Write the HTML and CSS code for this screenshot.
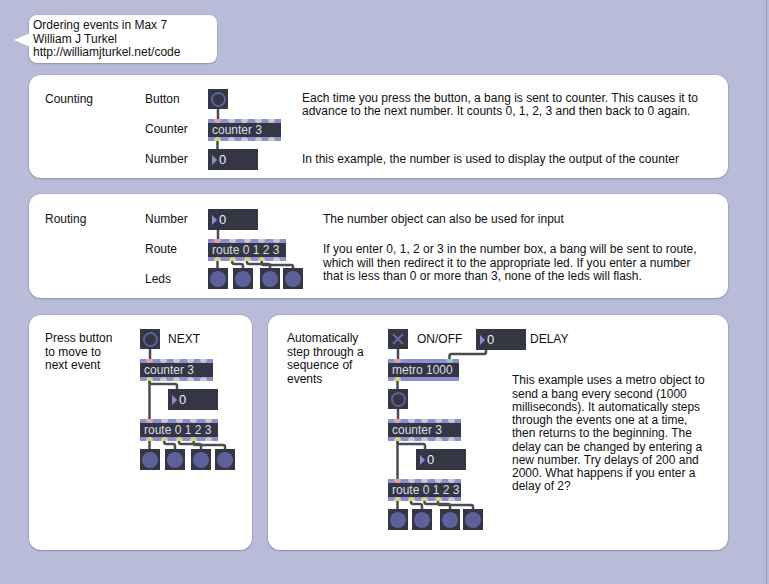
FILE: index.html
```html
<!DOCTYPE html>
<html>
<head>
<meta charset="utf-8">
<title>Ordering events in Max 7</title>
<link rel="stylesheet" href="styles.css">
</head>
<body>
<div class="page">
  <div class="bubble">Ordering events in Max 7<br>William J Turkel<br>http://williamjturkel.net/code</div>

  <section class="panel grid3 counting">
    <div class="title">Counting</div>
    <div class="lab r1">Button</div>
    <div class="lab r2">Counter</div>
    <div class="lab r3">Number</div>
    <div class="patch pc">
      <svg class="cords" width="80" height="82"><path d="M10 20V31"/><path d="M9.5 50V61"/></svg>
      <div class="btn" style="left:0;top:0"></div>
      <div class="obj" style="left:0;top:30px;width:73px">
        <div class="strip"><i class="pink"></i><i></i><i></i><i></i><i></i></div>
        <div class="txt">counter 3</div>
        <div class="strip bot"><i class="yel"></i><i></i><i></i><i></i><i></i></div>
      </div>
      <div class="num" style="left:0;top:60px"><b></b>0</div>
    </div>
    <p class="desc d12">Each time you press the button, a bang is sent to counter. This causes it to<br>advance to the next number. It counts 0, 1, 2, 3 and then back to 0 again.</p>
    <p class="note r3">In this example, the number is used to display the output of the counter</p>
  </section>

  <section class="panel grid3 routing">
    <div class="title">Routing</div>
    <div class="lab r1">Number</div>
    <div class="lab r2">Route</div>
    <div class="lab r3">Leds</div>
    <div class="patch pr">
      <svg class="cords" width="105" height="81">
        <path d="M10 21V31"/>
        <path d="M9.5 50V60"/>
        <path d="M24.25 50V53Q24.25 55 26.25 55H33Q35 55 35 57V60"/>
        <path d="M39 50V53Q39 55 41 55H60Q62 55 62 57V60"/>
        <path d="M53.75 50V54Q53.75 56 55.75 56H83Q85 56 85 58V60"/>
      </svg>
      <div class="num" style="left:0;top:0"><b></b>0</div>
      <div class="obj" style="left:0;top:30px;width:78px">
        <div class="strip"><i class="pink"></i><i></i><i></i><i></i><i></i></div>
        <div class="txt">route 0 1 2 3</div>
        <div class="strip bot"><i class="yel"></i><i class="yel"></i><i class="yel"></i><i class="yel"></i><i></i></div>
      </div>
      <div class="led" style="left:0;top:59px"></div>
      <div class="led" style="left:25px;top:59px"></div>
      <div class="led" style="left:52px;top:59px"></div>
      <div class="led" style="left:75px;top:59px"></div>
    </div>
    <p class="note r1">The number object can also be used for input</p>
    <p class="desc d23">If you enter 0, 1, 2 or 3 in the number box, a bang will be sent to route,<br>which will then redirect it to the appropriate led. If you enter a number<br>that is less than 0 or more than 3, none of the leds will flash.</p>
  </section>

  <div class="row">
    <section class="panel press">
      <p class="side">Press button<br>to move to<br>next event</p>
      <div class="patch pp">
        <svg class="cords" width="110" height="141">
          <path d="M10 20V31"/>
          <path d="M9.5 50V91"/>
          <path d="M9.5 52V53Q9.5 55 11.5 55H35Q37 55 37 57V61"/>
          <path d="M9.5 110V121"/>
          <path d="M24.25 110V113Q24.25 115 26.25 115H33Q35 115 35 117V121"/>
          <path d="M39 110V113Q39 115 41 115H59Q61 115 61 117V121"/>
          <path d="M53.75 110V114Q53.75 116 55.75 116H83Q85 116 85 118V121"/>
        </svg>
        <div class="btn" style="left:0;top:0"></div>
        <div class="cmt" style="left:28px;top:0">NEXT</div>
        <div class="obj" style="left:0;top:30px;width:73px">
          <div class="strip"><i class="pink"></i><i></i><i></i><i></i><i></i></div>
          <div class="txt">counter 3</div>
          <div class="strip bot"><i class="yel"></i><i></i><i></i><i></i><i></i></div>
        </div>
        <div class="num" style="left:28px;top:60px"><b></b>0</div>
        <div class="obj" style="left:0;top:90px;width:78px">
          <div class="strip"><i class="pink"></i><i></i><i></i><i></i><i></i></div>
          <div class="txt">route 0 1 2 3</div>
          <div class="strip bot"><i class="yel"></i><i class="yel"></i><i class="yel"></i><i class="yel"></i><i></i></div>
        </div>
        <div class="led" style="left:0;top:120px"></div>
        <div class="led" style="left:25px;top:120px"></div>
        <div class="led" style="left:51px;top:120px"></div>
        <div class="led" style="left:75px;top:120px"></div>
      </div>
    </section>

    <section class="panel auto">
      <p class="side">Automatically<br>step through a<br>sequence of<br>events</p>
      <div class="patch pa">
        <svg class="cords" width="124" height="201">
          <path d="M10 20V31"/>
          <path d="M98 21V23Q98 25 96 25H63.5Q61.5 25 61.5 27V31"/>
          <path d="M9.5 50V61"/>
          <path d="M10 80V91"/>
          <path d="M9.5 110V151"/>
          <path d="M9.5 112V113Q9.5 115 11.5 115H35Q37 115 37 117V121"/>
          <path d="M9.5 170V181"/>
          <path d="M23 170V173Q23 175 25 175H32Q34 175 34 177V181"/>
          <path d="M36.5 170V173Q36.5 175 38.5 175H60Q62 175 62 177V181"/>
          <path d="M50 170V174Q50 176 52 176H83Q85 176 85 178V181"/>
        </svg>
        <div class="tog" style="left:0;top:0"><svg width="20" height="20"><path d="M5 5L15 15M15 5L5 15"/></svg></div>
        <div class="cmt" style="left:29px;top:0">ON/OFF</div>
        <div class="num" style="left:88px;top:0"><b></b>0</div>
        <div class="cmt" style="left:142px;top:0">DELAY</div>
        <div class="obj" style="left:0;top:30px;width:71px">
          <div class="strip"><i class="pink"></i><i class="teal"></i></div>
          <div class="txt">metro 1000</div>
          <div class="strip bot"><i class="yel"></i></div>
        </div>
        <div class="btn" style="left:0;top:60px"></div>
        <div class="obj" style="left:0;top:90px;width:73px">
          <div class="strip"><i class="pink"></i><i></i><i></i><i></i><i></i></div>
          <div class="txt">counter 3</div>
          <div class="strip bot"><i class="yel"></i><i></i><i></i><i></i><i></i></div>
        </div>
        <div class="num" style="left:28px;top:120px"><b></b>0</div>
        <div class="obj" style="left:0;top:150px;width:73px">
          <div class="strip"><i class="pink"></i><i></i><i></i><i></i><i></i></div>
          <div class="txt">route 0 1 2 3</div>
          <div class="strip bot"><i class="yel"></i><i class="yel"></i><i class="yel"></i><i class="yel"></i><i></i></div>
        </div>
        <div class="led" style="left:0;top:180px"></div>
        <div class="led" style="left:24px;top:180px"></div>
        <div class="led" style="left:52px;top:180px"></div>
        <div class="led" style="left:75px;top:180px"></div>
      </div>
      <p class="desc long">This example uses a metro object to<br>send a bang every second (1000<br>milliseconds). It automatically steps<br>through the events one at a time,<br>then returns to the beginning. The<br>delay can be changed by entering a<br>new number. Try delays of 200 and<br>2000. What happens if you enter a<br>delay of 2?</p>
    </section>
  </div>
</div>
</body>
</html>
```

FILE: styles.css
```css
html, body {
  margin: 0;
  padding: 0;
  background: #b8bcd8;
}

body {
  font-family: "Liberation Sans", Arial, sans-serif;
  font-size: 12px;
  color: #111;
}

p { margin: 0; }

.page {
  box-sizing: border-box;
  width: 767px;
  height: 584px;
  padding: 15px 0 0 29px;
  border-right: 1px solid #9699b2;
  display: flex;
  flex-direction: column;
}

.bubble {
  position: relative;
  box-sizing: border-box;
  width: 188px;
  height: 48px;
  padding: 4px 0 0 4px;
  line-height: 13.5px;
  background: #fff;
  border-radius: 8px;
  box-shadow: 0 0 0 1px rgba(0, 0, 0, 0.06), 0 1px 2px rgba(0, 0, 0, 0.18);
  margin-bottom: 12px;
  white-space: nowrap;
}

.bubble::before {
  content: "";
  position: absolute;
  left: -15px;
  top: 18px;
  width: 0;
  height: 0;
  border-right: 16px solid #fff;
  border-top: 7px solid transparent;
  border-bottom: 7px solid transparent;
}

.panel {
  box-sizing: border-box;
  background: #fff;
  border-radius: 12px;
  box-shadow: 0 0 0 1px rgba(0, 0, 0, 0.05), 0 1px 2px rgba(0, 0, 0, 0.2);
}

.grid3 {
  width: 699px;
  display: grid;
  grid-template-rows: 30px 30px 30px;
  padding-left: 16px;
}

.counting {
  height: 103px;
  padding-top: 14px;
  margin-bottom: 16px;
  grid-template-columns: 100px 63px 94px 1fr;
}

.routing {
  height: 104px;
  padding-top: 15px;
  margin-bottom: 17px;
  grid-template-columns: 100px 63px 115px 1fr;
}

.title { grid-column: 1; grid-row: 1; line-height: 20px; }
.lab { grid-column: 2; line-height: 20px; }
.r1 { grid-row: 1; }
.r2 { grid-row: 2; }
.r3 { grid-row: 3; }

.grid3 .patch { grid-column: 3; grid-row: 1 / 4; }
.grid3 .note { grid-column: 4; line-height: 20px; white-space: nowrap; }
.grid3 .desc { grid-column: 4; white-space: nowrap; line-height: 13.4px; }
.d12 { grid-row: 1 / 3; padding-top: 2.6px; }
.d23 { grid-row: 2 / 4; padding-top: 4.3px; }

.row {
  display: flex;
  gap: 16px;
  height: 235px;
}

.press {
  width: 223px;
  display: flex;
  padding: 14px 0 0 16px;
}

.auto {
  width: 460px;
  display: flex;
  padding: 14px 0 0 19px;
}

.side {
  line-height: 13.5px;
  margin-top: 3px;
  white-space: nowrap;
}

.press .side { width: 95px; }
.auto .side { width: 101px; }

.desc.long {
  margin-top: 45.3px;
  line-height: 13.25px;
  white-space: nowrap;
}

/* patch canvases */
.patch {
  position: relative;
  flex: none;
}

.pc { width: 80px; height: 82px; }
.pr { width: 105px; height: 81px; }
.pp { width: 110px; height: 141px; }
.pa { width: 124px; height: 201px; }

.cords {
  position: absolute;
  left: 0;
  top: 0;
  overflow: visible;
}

.cords path {
  fill: none;
  stroke: #4b4b53;
  stroke-width: 2.5;
  stroke-linecap: round;
}

.obj {
  position: absolute;
  height: 22px;
  background: #343644;
  overflow: hidden;
  display: flex;
  flex-direction: column;
}

.strip {
  flex: none;
  height: 4px;
  background: #8b8fd2;
  display: flex;
  justify-content: space-between;
  padding: 0 6px;
}

.strip i {
  flex: none;
  width: 7px;
  height: 7px;
  border-radius: 50%;
  background: #c8c8ce;
  margin-top: -3.5px;
}

.strip.bot i { margin-top: 0; }
.strip i.pink { background: #e3a3a6; }
.strip i.yel { background: #d6d27c; }
.strip i.teal { background: #8ccab4; }

.txt {
  flex: 1;
  line-height: 14px;
  padding-left: 4px;
  color: #dcdce4;
  white-space: nowrap;
}

.num {
  position: absolute;
  box-sizing: border-box;
  width: 50px;
  height: 21px;
  background: #343644;
  display: flex;
  align-items: center;
  padding-left: 4px;
  color: #ececf2;
  font-size: 13px;
}

.num b {
  width: 0;
  height: 0;
  border-left: 5px solid #8b8fd2;
  border-top: 5px solid transparent;
  border-bottom: 5px solid transparent;
  margin-right: 2px;
}

.btn, .led, .tog {
  position: absolute;
  width: 20px;
  height: 20px;
  background: #343644;
  display: flex;
  align-items: center;
  justify-content: center;
}

.led { height: 21px; }

.btn::after {
  content: "";
  box-sizing: border-box;
  width: 15px;
  height: 15px;
  border: 2px solid #5c6299;
  border-radius: 50%;
}

.led::after {
  content: "";
  width: 16px;
  height: 16px;
  border-radius: 50%;
  background: #5c6299;
}

.tog svg path {
  stroke: #646aa3;
  stroke-width: 2;
  fill: none;
}

.cmt {
  position: absolute;
  line-height: 20px;
  white-space: nowrap;
}
```
